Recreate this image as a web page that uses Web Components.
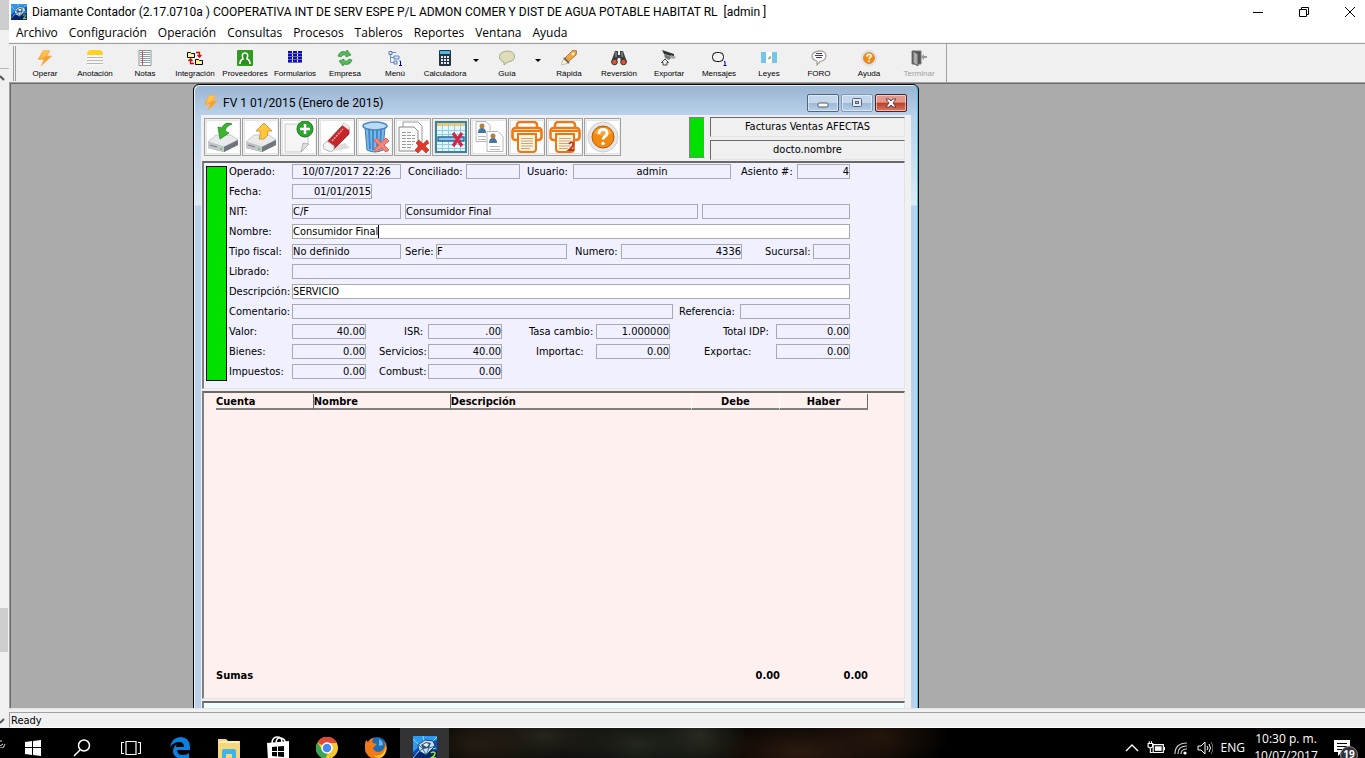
<!DOCTYPE html>
<html lang="es">
<head>
<meta charset="utf-8">
<title>Diamante Contador</title>
<style>
    html, body { height: 100%; margin: 0; }
    body {
        display: flex;
        flex-direction: column;
        overflow: hidden;
        background: #f0f0f0;
        color: #000;
        font: 12px/16px "Open Sans", "Noto Sans", sans-serif;
        --caption-font: 12px/16px Roboto, "Open Sans", sans-serif;
        --form-font: 11px/13px "DejaVu Sans Condensed", "DejaVu Sans", sans-serif;
    }
    .screen { flex: 1; min-height: 0; display: flex; }
    .app { flex: 1; min-width: 0; display: flex; flex-direction: column; }
</style>
</head>
<body>
<div class="screen">
    <back-window></back-window>
    <div class="app">
        <title-bar>Diamante Contador (2.17.0710a ) COOPERATIVA INT DE SERV ESPE P/L ADMON COMER Y DIST DE AGUA POTABLE HABITAT RL&nbsp; [admin ]</title-bar>
        <menu-bar items="Archivo,Configuración,Operación,Consultas,Procesos,Tableros,Reportes,Ventana,Ayuda"></menu-bar>
        <tool-bar>
            <tool-button icon="bolt">Operar</tool-button>
            <tool-button icon="note">Anotación</tool-button>
            <tool-button icon="pad">Notas</tool-button>
            <tool-button icon="integrate">Integración</tool-button>
            <tool-button icon="person">Proveedores</tool-button>
            <tool-button icon="forms">Formularios</tool-button>
            <tool-button icon="refresh">Empresa</tool-button>
            <tool-button icon="tree">Menú</tool-button>
            <tool-button icon="calc" drop>Calculadora</tool-button>
            <tool-button icon="bubble" drop>Guía</tool-button>
            <tool-button icon="rocket">Rápida</tool-button>
            <tool-button icon="binoculars">Reversión</tool-button>
            <tool-button icon="camera">Exportar</tool-button>
            <tool-button icon="message">Mensajes</tool-button>
            <tool-button icon="flag">Leyes</tool-button>
            <tool-button icon="forum">FORO</tool-button>
            <tool-button icon="help">Ayuda</tool-button>
            <tool-button icon="door" disabled>Terminar</tool-button>
        </tool-bar>
        <mdi-desktop>
            <mdi-window caption="FV 1 01/2015 (Enero de 2015)">
                <document-tools></document-tools>
                <invoice-form></invoice-form>
                <ledger-table></ledger-table>
                <extra-panel></extra-panel>
            </mdi-window>
        </mdi-desktop>
        <status-bar>Ready</status-bar>
    </div>
</div>
<task-bar></task-bar>

<script>
const diskBase = `<path d="M1 22 9 15h15l7 4v5L17 31 1 27z" fill="#8d9299"/><path d="M1 21 9 14h15l7 5-14 7z" fill="#e8eaec" stroke="#b4b8bc" stroke-width=".7"/><path d="M1 21l16 5v5L1 27z" fill="#c3c7cb"/><path d="M17 26l14-7v5l-14 7z" fill="#71767d"/><path d="M3 24l7 2" stroke="#777" stroke-width="1"/><circle cx="14" cy="28" r="1" fill="#4ad228"/>`;
const printerBase = `<rect x="6" y="1" width="20" height="8" rx="3" fill="#fff" stroke="#ef7714" stroke-width="2.5"/><rect x="1.500" y="7" width="29" height="12" rx="3" fill="#fff6e6" stroke="#ef7714" stroke-width="2.600"/><path d="M3 10h26" stroke="#ef7714" stroke-width="2"/><path d="M7 13h18v15q0 3-3 3H10q-3 0-3-3z" fill="#fdf3d8" stroke="#e77817" stroke-width="2"/><path d="M10 17.500h12M10 20h12M10 22.500h12M10 25h12M10 27.500h9" stroke="#c79a72" stroke-width=".9"/>`;
const orangeHelp = `<circle cx="16" cy="16" r="15" fill="#e6e6e8" stroke="#cfcfd2"/><circle cx="16" cy="16" r="11" fill="#f28a12" stroke="#b85a08"/><path d="M7 12a10 9 0 0 1 18 0q-9 6-18 0z" fill="#ffb65c" opacity=".6"/><path d="M12 13q0-4.500 4-4.500t4 3.800q0 2.200-2.400 3.400-1.500.9-1.500 2.800" fill="none" stroke="#fff" stroke-width="2.800"/><circle cx="16" cy="22.500" r="1.800" fill="#fff"/>`;
const redX = `<path d="M19 22l3-3 4 4 4-4 2 3-4 3 4 4-3 3-4-4-4 4-3-3 4-4z" fill="#e0382a" stroke="#b8231a" stroke-width=".6"/>`;
const gem = `<rect width="24" height="24" fill="#0b4fc4"/><path d="M0 0h24v4L10 7 0 16z" fill="#2b9af0"/><path d="M0 24v-5l14-6 10 2v9z" fill="#07246b"/><path d="M0 3l6 6M10 0l1 5M24 1l-5 5M0 22l6-7M23 12l-3 1" stroke="#8fd6ff"/><path d="M5 9l7-5 8 1 2 5-9 9-7-4z" fill="#c4e4f5" stroke="#0a2a55" stroke-width=".8"/><path d="M8 9l5-3 5 1-2 5-6 1z" fill="#33506c"/><path d="M10 9l3-2 3 1-2 3z" fill="#e9f6ff"/><path d="M10 13l3 6 3-7 6-2M6 9l4 4-4 2" fill="none" stroke="#224c78" stroke-width=".8"/><path d="M18 17q2-2 4 0 .5 2-4 5h5" fill="none" stroke="#a4e832" stroke-width="1.500"/>`;

// [viewBox size, markup]
const icons = {
    gem: [24, gem],
    bolt: [16, `<path d="M6 .5h7L10 6h5L4 16l3-6.500H1z" fill="#fba02c" stroke="#f0b871" stroke-width=".6"/><path d="M6 1h6L9 6l-6 3z" fill="#ffc24d"/>`],
    note: [16, `<path d="M0 5q0-5 4-5h8q4 0 4 5z" fill="#ffd21c"/><path d="M0 6h16v10H0z" fill="#f6f6f6"/><path d="M0 7.500h16M0 10.500h16M0 13.500h16" stroke="#b9b9b9"/>`],
    pad: [16, `<path d="M2 .5h12v15H2z" fill="#fff" stroke="#8b9499"/><path d="M3 2.500h10M3 4.500h10M3 6.500h10M3 8.500h10M3 10.500h10M3 12.500h10" stroke="#8ca3b0"/><path d="M5.500 1v14" stroke="#d84a43"/>`],
    integrate: [16, `<path d="M.5 2.500h3l1 1h3v4h-7zM8.500 9.500h3l1 1h3v4h-7z" fill="#fff36b" stroke="#000"/><path d="M2 5.500h4M10 12.500h4" stroke="#fff"/><path d="M9 2.500h3.500V7M10.500 5l2 2 2-2M7 13.500H3.500V9M1.500 11l2-2 2 2" fill="none" stroke="#e00000" stroke-width="1.300"/>`],
    person: [16, `<rect width="16" height="16" rx="1" fill="#319a20"/><path d="M3 14q0-4 3-5-2-6 2-6t2 6q3 1 3 5" fill="#2a8d1c" stroke="#fff" stroke-width="1.600"/>`],
    forms: [16, `<path d="M1 2h4M1 5h4M1 8h4M1 11h4M6 2h4M6 5h4M6 8h4M6 11h4M11 2h4M11 5h4M11 8h4M11 11h4" stroke="#0808d8" stroke-width="2"/><path d="M1 3.500h14M1 6.500h14M1 9.500h14M1 12.500h14" stroke="#000" stroke-width=".5"/>`],
    refresh: [16, `<path d="M1 6q2-6 8-4l1-2 4 5-5 2v-2q-4-1-5 2zM15 10q-2 6-8 4l-1 2-4-5 5-2v2q4 1 5-2z" fill="#58b858" stroke="#2a8b38" stroke-width=".7"/>`],
    tree: [16, `<path d="M3.500 4v8.500H7M3.500 7.500H7M5 2.500h4" fill="none" stroke="#6f8fc8"/><path d="M2 1.500h3v3H2zM7 6h5v3H7zM7 11h3v3H7z" fill="#dce8ff" stroke="#5b7fbd"/><path d="M12.500 11h1v4.500M12 15.500h3" fill="none" stroke="#0000a0"/>`],
    calc: [16, `<rect x="2" width="12" height="16" rx="1" fill="#263440"/><path d="M3 1h10v3H3z" fill="#4cb6e2"/><path d="M4 6h2v2H4zM7 6h2v2H7zM10 6h2v2h-2zM4 9h2v2H4zM7 9h2v2H7zM10 9h2v2h-2zM4 12h2v2H4zM7 12h2v2H7zM10 12h2v2h-2z" fill="#e5edf0"/>`],
    bubble: [16, `<path d="M8 1q7 0 7.500 5T9 12l-4 3v-3Q.5 11 .5 6.500T8 1z" fill="#ddddb8" stroke="#aaa98b"/>`],
    rocket: [16, `<path d="M4 8 12 0l4 1-1 4-8 7z" fill="#efa73d" stroke="#96693a" stroke-width=".8"/><circle cx="12" cy="4" r="1.400" fill="#fff6d0"/><path d="M0 15l3-7 5 5z" fill="#fff5bc" stroke="#a3a3a3" stroke-width=".6"/><path d="M3 8l5 5" stroke="#6c6c78" stroke-width="2"/>`],
    binoculars: [16, `<path d="M4 1h3v4h2V1h3l4 11-5 2-2-6H7l-2 6-5-2z" fill="#3d4143"/><circle cx="3.500" cy="12" r="2.800" fill="#e65228" stroke="#333"/><circle cx="12.500" cy="12" r="2.800" fill="#e65228" stroke="#333"/><path d="M5 2v5M11 2v5" stroke="#a0a8aa"/>`],
    camera: [16, `<path d="M1 0l12 4v3L3 4z" fill="#333"/><path d="M3 4l8 3-3 3-4-2z" fill="#727c78"/><path d="M10 5l5 2-2 2-4-1z" fill="#9da6a5"/><path d="M4 9l3.500 3.500H6V15H2v-2.500H.5z" fill="#eee" stroke="#444"/>`],
    message: [16, `<rect x="1.500" y="2.500" width="11" height="9" rx="4" fill="#f4f4f4" stroke="#000"/><path d="M13 11.500h1v4M12.500 15.500h3" fill="none" stroke="#00008c"/>`],
    flag: [16, `<path d="M0 2h5v11H0zM11 2h5v11h-5z" fill="#75c5e8"/><path d="M5 2h6v11H5z" fill="#fff"/><path d="M7 9q3 1 3-3l-2 1z" fill="#8ca853"/>`],
    forum: [16, `<path d="M8 .8q7 0 7 5T9 11.500L6 15v-4Q1 10 1 6t7-5.200z" fill="#fff" stroke="#a5a093" stroke-width="1.200"/><path d="M5 3.500h6M4 5.500h8M5 7.500h6" stroke="#413d82"/>`],
    help: [32, orangeHelp],
    door: [16, `<path d="M1 1h9v13H1z" fill="#555" stroke="#777"/><path d="M2 1l5 3v12l-5-3z" fill="#aaa" stroke="#555"/><path d="M16 6h-3V4l-3 3 3 3V8h3z" fill="#999"/>`],
    save: [32, diskBase + `<path d="M25 3q-7-3-10 4l-4-1 2 12 9-6-4-2q1-5 7-7z" fill="#3bb62f" stroke="#26871f" stroke-width=".8"/>`],
    load: [32, diskBase + `<path d="M19 2l8 8h-4q1 5-4 8h-5q2-4 1-8h-4z" fill="#ffc53c" stroke="#c98a20" stroke-width=".8"/>`],
    add: [32, `<path d="M2 3h23v20l-7 8H2z" fill="#f5f5f5" stroke="#c9c9c9"/><path d="M18 31l2-9 6 1z" fill="#ddd" stroke="#999" stroke-width=".6"/><circle cx="22" cy="8" r="8" fill="#2ba52d" stroke="#1b811d"/><path d="M22 3v10M17 8h10" stroke="#fff" stroke-width="2.500"/>`],
    erase: [32, `<path d="M3 27l6 4 20-4-5-5z" fill="#ddd"/><path d="M4 23 22 4l6 4v5L12 29l-6-2z" fill="#c9262b" stroke="#951a1e" stroke-width=".8"/><path d="M2 24l4-4 7 5v3l-3 3-7-3z" fill="#f4f4f4" stroke="#bbb"/><path d="M21 4l2-2 6 4-1 3z" fill="#eee" stroke="#bbb" stroke-width=".6"/><path d="M11 20 22 8" stroke="#f0a8a8" stroke-width="1.500" stroke-dasharray="2 1"/>`],
    trash: [32, `<path d="M6 6h20l-2 23q-8 4-16 0z" fill="#79b8e8" stroke="#3c7bb5"/><path d="M10 9l1 19M14 9v20M18 9v20M22 9l-1 19" stroke="#3e87c3" stroke-width="1.800"/><ellipse cx="16" cy="5" rx="12" ry="4" fill="#b9dcf4" stroke="#4d87b9" stroke-width="1.500"/><path d="M15 20l3-3 4 5 5-5 3 3-5 4 5 5-3 2-5-4-4 4-3-3 5-4z" fill="#f0857b" stroke="#e05c50"/>`],
    remove: [32, `<path d="M6 1h15l4 4v21H6z" fill="#fff" stroke="#999"/><path d="M2 6h15l4 4v20H2z" fill="#fafafa" stroke="#888"/><path d="M5 11.500h10M5 14.500h13M5 17.500h13M5 20.500h13M5 23.500h11M5 26.500h10" stroke="#999" stroke-dasharray="4 1"/>` + redX],
    gridx: [32, `<path d="M1 1h30v30H1z" fill="#e5f5ff" stroke="#39839d" stroke-width="2"/><path d="M2 2h28v3H2z" fill="#f2c66d"/><path d="M7.500 2v28M13.500 2v28M19.500 2v28M25.500 2v28M2 9.500h28M2 13.500h28M2 23.500h28M2 27.500h28" stroke="#8fcfde"/><path d="M3 16h26v4H3z" fill="#8cc4ea" stroke="#246898" stroke-width="1.300"/><path d="M18 12l9 13M27 12l-9 13" stroke="#d52542" stroke-width="3.200"/>`],
    copies: [32, `<path d="M3 .5h10l4 4v16H3z" fill="#fff" stroke="#b6b8b9"/><path d="M14 10.500h11l5 5v15H14z" fill="#fff" stroke="#b6b8b9"/><circle cx="9" cy="5" r="2.500" fill="#b77d42"/><path d="M5 12q0-5 4-5t4 5z" fill="#47759e"/><circle cx="20" cy="15" r="2.500" fill="#b77d42"/><path d="M16 22q0-5 4-5t4 5z" fill="#47759e"/><path d="M5 15.500h8M5 18.500h8M17 25.500h10M17 28.500h10" stroke="#bbb"/>`],
    print: [32, printerBase],
    print2: [32, printerBase + `<path d="M20 23q2-3 4-1 1 3-4 7h5" fill="none" stroke="#c52e25" stroke-width="1.800"/>`],
    min: [16, `<rect x="3" y="8" width="10" height="4" rx="1" fill="#fff" stroke="#555a68"/>`],
    max: [16, `<rect x="3.500" y="3.500" width="9" height="8" rx="1" fill="#e2eaf2" stroke="#56627a"/><rect x="6.500" y="6.500" width="3" height="2" fill="#aac3dc" stroke="#56627a"/>`],
    close: [16, `<path d="M3 4h3l2 2 2-2h3l-3 4 3 4h-3l-2-2-2 2H3l3-4z" fill="#fff" stroke="#5c3038" stroke-width=".9"/>`],
    sysmin: [12, `<path d="M1 6.500h10" stroke="#000"/>`],
    sysmax: [12, `<path d="M1.500 3.500h7v7h-7zM3.500 3V1.500h7v7H9" fill="none" stroke="#000"/>`],
    sysclose: [12, `<path d="M1 1l10 10M11 1 1 11" stroke="#000"/>`],
    windows: [18, `<path d="M1 3l7-1v6H1zM9 2l8-1v7H9zM1 9h7v7l-7-1zM9 9h8v8l-8-1z" fill="#fff"/>`],
    search: [20, `<circle cx="12" cy="7.500" r="5.500" fill="none" stroke="#fff" stroke-width="1.500"/><path d="M8 12l-6 6" stroke="#fff" stroke-width="1.500"/>`],
    tasks: [20, `<path d="M5 3.500h10v13H5zM3 4.500H.5v11H3M17 4.500h2.500v11H17" fill="none" stroke="#fff" stroke-width="1.200"/>`],
    edge: [22, `<path d="M1 10Q3 0 12 0q9 1 9 10v3H8q0 5 6 5 4 0 6-2v5q-3 1-7 1-9-1-9-8 0-4 4-7-1 1-1 3h8q0-5-5-5-5 0-9 5z" fill="#0a80df"/>`],
    folder: [22, `<path d="M0 2h8l2 2h12v17H0z" fill="#f5d77b"/><path d="M1 5h20" stroke="#fff0b5" stroke-width="2"/><path d="M4 21v-7q0-2 2-2h10q2 0 2 2v7h-4v-4H8v4z" fill="#3eb4e8"/>`],
    store: [24, `<path d="M1 7l22-2v19H2z" fill="#fff"/><path d="M6 8q0-7 5-7t5 5M10 6q1-5 5-4t4 4" fill="none" stroke="#fff" stroke-width="1.500"/><path d="M6 11l5-.5V15H6zM12 10.500l6-.5v5h-6zM6 16h5v4.500L6 20zM12 16h6v5l-6-.5z" fill="#000"/>`],
    chrome: [22, `<circle cx="11" cy="11" r="11" fill="#f5c72e"/><path d="M11 11 1.500 5.500A11 11 0 0 1 21 6H11z" fill="#df493a"/><path d="M1.500 5.500 7 14l5 2-3 6A11 11 0 0 1 1.500 5.500z" fill="#3aa457"/><circle cx="11" cy="11" r="5" fill="#4789ef" stroke="#fff" stroke-width="1.500"/>`],
    firefox: [22, `<circle cx="12" cy="10" r="10" fill="#1e6cb5"/><path d="M14 2q4 2 4 6l-4 1z" fill="#69b7e5"/><path d="M1 3l2 2Q5 1 9 1 6 4 8 6l4 1-4 4q1 4 6 4 5-1 6-7l-1-4q4 5 2 11-3 7-10 7T.5 15Q-1 9 1 3z" fill="#f17a17"/><path d="M20 6q2 5-2 10-4 4-10 2 4 4 9 2 6-4 3-14z" fill="#ffc52c"/>`],
    up: [14, `<path d="M1 10l6-6 6 6" fill="none" stroke="#fff" stroke-width="1.400"/>`],
    battery: [16, `<path d="M5.500 5h9v7h-9z" fill="none" stroke="#fff"/><path d="M7 6.500h6v4H7z" fill="#fff"/><path d="M15.500 7v3M1 4h4v3l-2 1-2-1zM2 2v2M4 2v2M3 8v4h2" fill="none" stroke="#fff"/>`],
    wifi: [16, `<path d="M2 14Q2 3 14 3M5 14q0-8 9-8M8 14q0-5 6-5" fill="none" stroke="#ccc" stroke-width="1.200"/><circle cx="12" cy="13" r="1.600" fill="#fff"/>`],
    volume: [16, `<path d="M1 6h3l4-4v12l-4-4H1z" fill="none" stroke="#fff"/><path d="M10 6q2 2 0 4M12 4q3 4 0 8" fill="none" stroke="#fff"/><path d="M14 2q4 6 0 12" fill="none" stroke="#777"/>`],
    notice: [18, `<path d="M1 1h16v12H9l-4 4v-4H1z" fill="#fff"/><path d="M4 4.500h10M4 7.500h10M4 10.500h7" stroke="#000"/>`],
    globe: [8, `<path d="M0 1h2M0 6l3-2M0 8h3l2-4" fill="none" stroke="#ddd"/>`]
};

function icon(name, size) {
    const [box, body] = icons[name];
    return `<svg width="${size}" height="${size}" viewBox="0 0 ${box} ${box}" aria-hidden="true">${body}</svg>`;
}

function define(name, render) {
    customElements.define(name, class extends HTMLElement {
        constructor() {
            super();
            this.attachShadow({ mode: 'open' });
        }

        connectedCallback() {
            this.shadowRoot.innerHTML = render(this);
        }
    });
}

define('back-window', () => `
    <style>
        :host { flex: none; width: 9px; display: flex; flex-direction: column; background: #f0f0f0; overflow: hidden; }
        .cap { height: 30px; background: #cdcdcd; }
        .row { height: 38px; border-bottom: 1px solid #bbb; }
        .thumb { width: 8px; height: 44px; margin-top: auto; background: #cdcdcd; }
        .foot { height: 76px; display: flex; align-items: flex-end; }
        svg { display: block; }
    </style>
    <div class="cap"></div><div class="row"></div>
    <svg width="6" height="18" viewBox="0 0 6 18"><path d="M0 7l4 4" stroke="#555" stroke-width="2"/></svg>
    <div class="thumb"></div>
    <div class="foot"><svg width="6" height="14" viewBox="0 0 6 14"><path d="M0 9l4-4" stroke="#555" stroke-width="2"/></svg></div>
`);

define('title-bar', () => `
    <style>
        :host { flex: none; display: flex; align-items: center; height: 23px; background: #fff; font: var(--caption-font); }
        .name { flex: 1; min-width: 0; padding-left: 5px; white-space: nowrap; overflow: hidden; }
        svg { display: block; }
        .logo { padding-left: 2px; }
        button { width: 46px; height: 23px; padding: 0; border: 0; background: none; display: grid; place-items: center; }
        .buttons { display: flex; margin-right: -8px; }
    </style>
    <span class="logo">${icon('gem', 16)}</span>
    <span class="name"><slot></slot></span>
    <span class="buttons">
        <button aria-label="Minimizar">${icon('sysmin', 12)}</button>
        <button aria-label="Restaurar">${icon('sysmax', 12)}</button>
        <button aria-label="Cerrar">${icon('sysclose', 12)}</button>
    </span>
`);

define('menu-bar', el => `
    <style>
        :host { flex: none; display: block; background: #fff; border-bottom: 1px solid #f0f0f0; }
        nav { display: flex; gap: 11px; height: 19px; padding-left: 7px; align-items: center; }
        a { color: #000; text-decoration: none; }
    </style>
    <nav>${el.getAttribute('items').split(',').map(item => `<a href="#">${item}</a>`).join('')}</nav>
`);

define('tool-bar', () => `
    <style>
        :host { flex: none; display: flex; height: 38px; border-top: 1px solid #a0a0a0; background: #f0f0f0; }
        .band { display: flex; padding: 1px 2px 0 4px; border-right: 1px solid #a0a0a0; }
        .grip { width: 1px; height: 35px; margin: 1px 4px 0 0; border: 1px solid #a0a0a0; border-width: 0 1px; }
    </style>
    <div class="band"><div class="grip"></div><slot></slot></div>
`);

define('tool-button', el => `
    <style>
        :host { display: flex; }
        button {
            width: 50px; padding: 5px 0 0; border: 0; background: none; color: #000;
            display: flex; flex-direction: column; align-items: center; gap: 2px;
            font: 8px/11px "Liberation Sans", Arial, sans-serif;
        }
        button:disabled { color: #a0a0a0; }
        .arrow { width: 12px; padding: 0; }
        .arrow::before { content: ""; margin-top: 14px; border: 3px solid transparent; border-top-color: #000; border-bottom: 0; }
    </style>
    <button ${el.hasAttribute('disabled') ? 'disabled' : ''}>${icon(el.getAttribute('icon'), 16)}<slot></slot></button>
    ${el.hasAttribute('drop') ? '<button class="arrow" aria-label="Más"></button>' : ''}
`);

define('mdi-desktop', () => `
    <style>
        :host {
            flex: 1; min-height: 0; display: block; position: relative; overflow: hidden;
            background: #ababab; border: 1px solid #a0a0a0; border-right: 0; border-bottom-color: #e3e3e3;
            box-shadow: inset 1px 1px #696969;
        }
    </style>
    <slot></slot>
`);

define('mdi-window', el => `
    <style>
        :host {
            position: absolute; left: 183px; top: 1px; width: 726px; height: 680px; box-sizing: border-box;
            display: flex; flex-direction: column; padding: 0 7px 0 7px;
            border: 1px solid #000; border-radius: 6px 6px 0 0;
            box-shadow: inset 1px 1px #e9f2fb, inset -1px 0 #3ec5ea;
            background: linear-gradient(#99b4d1, #b9d1ea 30px, #dfeaf6 120px, #b9d1ea 121px);
        }
        header { flex: none; display: flex; align-items: center; gap: 4px; height: 30px; padding: 0 4px 0 2px; }
        h1 { flex: 1; margin: 6px 0 0; font: var(--caption-font); }
        svg { display: block; }
        header > svg { margin-top: 6px; }
        .controls { display: flex; gap: 2px; margin-top: 6px; }
        button {
            width: 32px; height: 18px; padding: 0; display: grid; place-items: center;
            border: 1px solid #54657b; border-radius: 2px; box-shadow: inset 0 0 0 1px #ffffff80;
            background: linear-gradient(#c4d7eb 50%, #9db9d6 50%, #b7d0e9);
        }
        .max { border-color: #8199b4; }
        .close { border-color: #571f22; background: linear-gradient(#e39a8e 45%, #bd3d28 50%, #d77a63); }
        main { flex: 1; min-height: 0; display: flex; flex-direction: column; gap: 2px; padding: 1px 6px 0 1px; background: #f0f0f0; }
    </style>
    <header>
        ${icon('bolt', 16)}<h1>${el.getAttribute('caption')}</h1>
        <span class="controls">
            <button aria-label="Minimizar">${icon('min', 16)}</button>
            <button class="max" aria-label="Maximizar">${icon('max', 16)}</button>
            <button class="close" aria-label="Cerrar">${icon('close', 16)}</button>
        </span>
    </header>
    <main><slot></slot></main>
`);

define('document-tools', () => {
    const tools = { save: 'Guardar', load: 'Abrir', add: 'Nuevo', erase: 'Borrar', trash: 'Eliminar', remove: 'Anular', gridx: 'Quitar fila', copies: 'Copiar', print: 'Imprimir', print2: 'Imprimir 2', help: 'Ayuda' };
    return `
    <style>
        :host { display: flex; height: 43px; padding-left: 2px; }
        .tools { flex: 1; display: flex; gap: 1px; padding-top: 2px; }
        button {
            width: 37px; height: 38px; padding: 0; display: grid; place-items: center;
            border: 1px solid #a0a0a0; background: #e3e3e3; box-shadow: inset 0 0 0 1px #f0f0f0;
        }
        button svg { background: #fff; }
        .light { width: 14px; height: 39px; margin: 1px 5px 0 0; border: 1px solid #808080; border-right-color: #fff; background: #00e100; }
        .names { display: grid; gap: 3px; grid-template-rows: 20px 20px; width: 195px; padding-top: 1px; }
        .names span { text-align: center; font: var(--form-font); line-height: 18px; border: 1px solid; border-color: #696969 #e3e3e3 #e3e3e3 #696969; }
    </style>
    <div class="tools">${Object.keys(tools).map(t => `<button aria-label="${tools[t]}">${icon(t, 32)}</button>`).join('')}</div>
    <div class="light"></div>
    <div class="names"><span>Facturas Ventas AFECTAS</span><span>docto.nombre</span></div>`;
});

// label-width includes the space up to the box, lead is the space before the label
define('form-field', el => {
    const label = el.getAttribute('label');
    const width = el.getAttribute('width');
    const typing = el.hasAttribute('typing');
    return `
    <style>
        :host { display: flex; padding-left: ${el.getAttribute('lead') || 0}px; flex: ${width ? 'none' : '1'}; min-width: 0; font: var(--form-font); }
        label { flex: none; width: ${el.getAttribute('label-width') || 0}px; line-height: 15px; white-space: nowrap; }
        .box {
            ${width ? `width: ${width}px;` : 'flex: 1;'} min-width: 0; height: 15px; box-sizing: border-box; display: flex; align-items: center;
            border: 1px solid #a9a9b2; background: ${el.hasAttribute('editable') ? '#fff' : 'transparent'};
        }
        input {
            ${typing ? 'field-sizing: content;' : 'flex: 1; width: 0;'}
            min-width: 0; height: 13px; padding: 0; border: 0; outline: 0; background: none;
            color: #000; font: inherit; text-align: ${el.getAttribute('text') || 'left'};
        }
        .caret { width: 1px; height: 13px; background: #000; }
    </style>
    ${label ? `<label for="f">${label}</label>` : ''}
    <span class="box"><input id="f" ${label ? '' : 'aria-label="Detalle"'} value="${el.getAttribute('value') || ''}">${typing ? '<i class="caret"></i>' : ''}</span>`;
});

define('invoice-form', () => `
    <style>
        :host {
            display: flex; gap: 2px; height: 228px; box-sizing: border-box; padding: 1px 54px 0 2px; background: #f0f0ff;
            border: 1px solid; border-color: #696969 #e3e3e3 #e3e3e3 #808080; border-width: 2px 1px 1px 2px;
        }
        .light { width: 19px; height: 213px; margin-top: 2px; border: 1px solid #000; background: #00e100; }
        .rows { flex: 1; display: grid; grid-auto-rows: 20px; align-content: start; }
        .row { display: flex; }
    </style>
    <div class="light"></div>
    <div class="rows">
        <div class="row">
            <form-field label="Operado:" label-width="63" width="109" value="10/07/2017 22:26" text="center"></form-field>
            <form-field label="Conciliado:" lead="7" label-width="58" width="54"></form-field>
            <form-field label="Usuario:" lead="7" label-width="46" width="158" value="admin" text="center"></form-field>
            <form-field label="Asiento #:" lead="10" label-width="56" value="4" text="right"></form-field>
        </div>
        <div class="row"><form-field label="Fecha:" label-width="63" width="80" value="01/01/2015" text="right"></form-field></div>
        <div class="row">
            <form-field label="NIT:" label-width="63" width="109" value="C/F"></form-field>
            <form-field lead="4" width="293" value="Consumidor Final"></form-field>
            <form-field lead="4"></form-field>
        </div>
        <div class="row"><form-field label="Nombre:" label-width="63" value="Consumidor Final" editable typing></form-field></div>
        <div class="row">
            <form-field label="Tipo fiscal:" label-width="63" width="109" value="No definido"></form-field>
            <form-field label="Serie:" lead="4" label-width="31" width="131" value="F"></form-field>
            <form-field label="Numero:" lead="8" label-width="46" width="121" value="4336" text="right"></form-field>
            <form-field label="Sucursal:" lead="23" label-width="48"></form-field>
        </div>
        <div class="row"><form-field label="Librado:" label-width="63"></form-field></div>
        <div class="row"><form-field label="Descripción:" label-width="63" value="SERVICIO" editable></form-field></div>
        <div class="row">
            <form-field label="Comentario:" label-width="63" width="381"></form-field>
            <form-field label="Referencia:" lead="6" label-width="61"></form-field>
        </div>
        <div class="row">
            <form-field label="Valor:" label-width="63" width="74" value="40.00" text="right"></form-field>
            <form-field label="ISR:" lead="38" label-width="24" width="74" value=".00" text="right"></form-field>
            <form-field label="Tasa cambio:" lead="27" label-width="67" width="74" value="1.000000" text="right"></form-field>
            <form-field label="Total IDP:" lead="53" label-width="53" value="0.00" text="right"></form-field>
        </div>
        <div class="row">
            <form-field label="Bienes:" label-width="63" width="74" value="0.00" text="right"></form-field>
            <form-field label="Servicios:" lead="13" label-width="49" width="74" value="40.00" text="right"></form-field>
            <form-field label="Importac:" lead="34" label-width="60" width="74" value="0.00" text="right"></form-field>
            <form-field label="Exportac:" lead="34" label-width="72" value="0.00" text="right"></form-field>
        </div>
        <div class="row">
            <form-field label="Impuestos:" label-width="63" width="74" value="0.00" text="right"></form-field>
            <form-field label="Combust:" lead="13" label-width="49" width="74" value="0.00" text="right"></form-field>
        </div>
    </div>
`);

define('ledger-table', () => `
    <style>
        :host {
            display: block; height: 308px; box-sizing: border-box; padding: 1px 36px 14px 12px; background: #fff0f0;
            border: 1px solid; border-color: #696969 #e3e3e3 #e3e3e3 #808080; border-width: 2px 1px 1px 2px;
        }
        table { width: 100%; height: 290px; table-layout: fixed; border-collapse: separate; border-spacing: 0; font: var(--form-font); font-weight: bold; }
        th, td { padding: 0; text-align: left; font-weight: bold; }
        thead { height: 16px; }
        thead th { height: 14px; border-bottom: 2px solid #808080; border-right: 1px solid #696969; }
        thead th:nth-child(n+3) { border-right-color: #fff; }
        thead th:last-child { border-right-color: #696969; }
        thead .num { text-align: center; }
        tfoot { height: 18px; }
        tfoot td { text-align: right; }
    </style>
    <table>
        <colgroup><col style="width: 15%"><col style="width: 21%"><col style="width: 37%"><col><col></colgroup>
        <thead><tr><th>Cuenta</th><th>Nombre</th><th>Descripción</th><th class="num">Debe</th><th class="num">Haber</th></tr></thead>
        <tbody><tr><td colspan="5"></td></tr></tbody>
        <tfoot><tr><th colspan="3">Sumas</th><td>0.00</td><td>0.00</td></tr></tfoot>
    </table>
`);

define('extra-panel', () => `
    <style>
        :host { flex: 1; display: block; background: #f0ffff; border: 2px solid #808080; border-top-color: #696969; border-right: 1px solid #e3e3e3; }
    </style>
`);

define('status-bar', () => `
    <style>
        :host { flex: none; display: block; height: 14px; margin-top: 3px; padding: 0 1px; border: 1px solid #a0a0a0; border-width: 1px 0 1px 1px; border-bottom-color: #fff; font: var(--form-font); line-height: 16px; }
    </style>
    <slot></slot>
`);

define('task-bar', () => {
    const apps = [['windows', 18, 'Inicio'], ['search', 20, 'Buscar'], ['tasks', 20, 'Vista de tareas'], ['edge', 22, 'Edge'], ['folder', 22, 'Explorador'], ['store', 24, 'Tienda'], ['chrome', 22, 'Chrome'], ['firefox', 22, 'Firefox'], ['gem', 24, 'Diamante Contador']];
    return `
    <style>
        :host { flex: none; display: block; height: 30px; overflow: hidden; background: #000; color: #fff; }
        .bar { display: flex; height: 40px; align-items: stretch; }
        button { width: 49px; padding: 0; border: 0; background: none; display: grid; place-items: center; }
        button:last-of-type { background: #333; }
        .edge { width: 8px; padding-top: 12px; box-sizing: border-box; }
        svg { display: block; }
        .wall {
            flex: 1;
            background:
                radial-gradient(ellipse 70px 40px at 4% 40%, #241c12, transparent),
                radial-gradient(ellipse 90px 40px at 14% 20%, #26241c, transparent),
                radial-gradient(ellipse 80px 40px at 28% 40%, #24271f, transparent),
                radial-gradient(ellipse 50px 40px at 37% 20%, #2a2c22, transparent),
                radial-gradient(ellipse 110px 40px at 52% 60%, #2c1a0f, transparent),
                radial-gradient(ellipse 70px 40px at 64% 20%, #22150b, transparent), #000;
        }
        .tray { display: flex; align-items: center; gap: 8px; padding-right: 14px; }
        .clock { width: 66px; padding-bottom: 3px; text-align: center; white-space: nowrap; line-height: 17px; }
        .notice { position: relative; margin-left: 6px; }
        .badge {
            position: absolute; left: 7px; top: 7px; width: 16px; height: 16px; border: 1px solid #888; border-radius: 50%;
            background: #333; text-align: center; font-size: 10px; font-weight: bold; line-height: 15px;
        }
    </style>
    <div class="bar">
        <span class="edge">${icon('globe', 8)}</span>
        ${apps.map(([name, size, label]) => `<button aria-label="${label}">${icon(name, size)}</button>`).join('')}
        <div class="wall"></div>
        <div class="tray">
            ${icon('up', 14)}${icon('battery', 18)}${icon('wifi', 16)}${icon('volume', 16)}
            <span>ENG</span>
            <span class="clock">10:30 p. m.<br>10/07/2017</span>
            <span class="notice">${icon('notice', 18)}<span class="badge">19</span></span>
        </div>
    </div>`;
});
</script>
</body>
</html>
